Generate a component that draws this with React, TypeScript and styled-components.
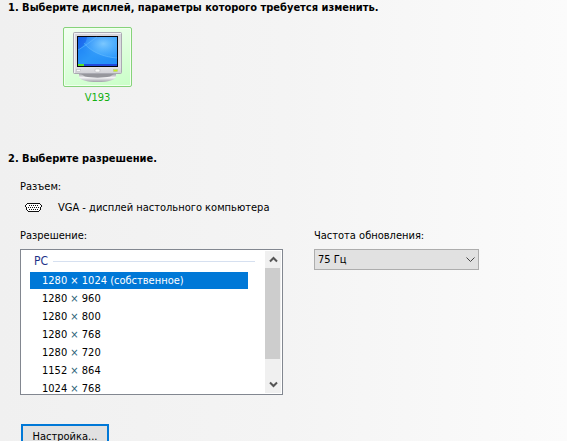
import React, { useState } from "react";
import styled, { createGlobalStyle } from "styled-components";

const GlobalStyle = createGlobalStyle`
  * { box-sizing: border-box; }
  html, body, #root { height: 100%; }
  body {
    margin: 0;
    overflow: hidden;
    background: linear-gradient(90deg, #f0f0f0 0%, #f4f4f4 50%, #fbfbfb 100%);
    color: #000;
    font: 11px/14px "DejaVu Sans Condensed", "Noto Sans", sans-serif;
  }
  button, select { font: inherit; color: inherit; border-radius: 0; }
`;

const Page = styled.main`
  padding: 1px 0 0 8px;
`;

const Section = styled.section<{ $space?: number }>`
  margin-top: ${(p) => p.$space ?? 0}px;
`;

const Heading = styled.h2`
  margin: 0;
  font-size: 11px;
  line-height: 14px;
  font-weight: 700;
  white-space: nowrap;
`;

const DisplayButton = styled.button`
  display: flex;
  flex-direction: column;
  align-items: center;
  gap: 4px;
  margin: 12px 0 0 55px;
  padding: 0;
  border: 0;
  background: none;
  color: #12b012;
  line-height: 14px;
`;

const DisplayTile = styled.span`
  display: flex;
  justify-content: center;
  padding: 4px 9px;
  border: 1px solid #86d37a;
  border-radius: 2px;
  box-shadow: inset 0 0 0 1px #f2fff0;
  background: linear-gradient(160deg, #f2fff1, #c9ffc7);
`;

const Fields = styled.div`
  padding: 14px 0 0 12px;
`;

const Label = styled.label`
  display: block;
  line-height: 14px;
`;

const Connector = styled.div`
  display: flex;
  align-items: center;
  gap: 16px;
  padding: 7px 0 0 5px;
  line-height: 14px;
`;

const Columns = styled.div`
  display: grid;
  grid-template-columns: minmax(0, 263fr) minmax(0, 165fr);
  column-gap: 31px;
  align-items: start;
  max-width: 459px;
  margin-top: 14px;
`;

const Field = styled.div`
  display: grid;
  gap: 6px;
`;

const ListBox = styled.div`
  display: flex;
  height: 146px;
  padding: 1px;
  border: 1px solid #828790;
  background: #fff;
`;

const ListBody = styled.div`
  flex: 1;
  min-width: 0;
  overflow: hidden;
  padding: 2px 17px 0 8px;
`;

const GroupTitle = styled.div`
  display: flex;
  align-items: center;
  gap: 5px;
  padding-left: 4px;
  margin-right: -7px;
  font-size: 12px;
  line-height: 16px;
  color: #1e3287;

  &::after {
    content: "";
    flex: 1;
    border-top: 1px solid #d6e0f0;
  }
`;

const Options = styled.div`
  display: grid;
  gap: 1px;
  padding-top: 3px;
`;

const Option = styled.button<{ $selected: boolean }>`
  width: 100%;
  height: 17px;
  padding: 1px 0 0 12px;
  border: 0;
  background: ${(p) => (p.$selected ? "#0078d7" : "transparent")};
  color: ${(p) => (p.$selected ? "#fff" : "#000")};
  line-height: 16px;
  text-align: left;
  white-space: nowrap;
`;

const Times = styled.span<{ $selected: boolean }>`
  color: ${(p) => (p.$selected ? "#fff" : "#2a5f78")};
`;

const ScrollBar = styled.div`
  display: flex;
  flex-direction: column;
  width: 16px;
  background: #f0f0f0;
`;

const ScrollButton = styled.button`
  display: flex;
  align-items: center;
  justify-content: center;
  height: 17px;
  padding: 0;
  border: 0;
  background: none;
`;

const ScrollTrack = styled.div`
  flex: 1;
`;

const ScrollThumb = styled.div`
  height: 84%;
  margin-right: 1px;
  background: #cdcdcd;
`;

const SelectWrap = styled.div`
  display: grid;
  align-items: center;
  & > * { grid-area: 1 / 1; }
  & > svg { justify-self: end; margin-right: 4px; pointer-events: none; }
`;

const Select = styled.select`
  appearance: none;
  width: 100%;
  height: 21px;
  padding: 1px 20px 0 3px;
  border: 1px solid #adadad;
  background: #e1e1e1;
  outline: none;
`;

const SetupButton = styled.button`
  display: block;
  height: 24px;
  min-width: 88px;
  margin: 29px 0 0 13px;
  padding: 1px 8px 0;
  border: 2px solid #0078d7;
  background: #e1e1e1;
  line-height: 19px;
`;

const MonitorIcon = () => (
  <svg width="49" height="50" viewBox="0 0 49 50" aria-hidden="true">
    <defs>
      <linearGradient id="case" x1="0" y1="0" x2="0" y2="1">
        <stop offset="0" stopColor="#d6d6dc" />
        <stop offset="0.85" stopColor="#e2e2e6" />
        <stop offset="1" stopColor="#d0d0d5" />
      </linearGradient>
      <linearGradient id="screen" x1="0" y1="0" x2="1" y2="1">
        <stop offset="0" stopColor="#1a74f4" />
        <stop offset="0.5" stopColor="#3aa4fc" />
        <stop offset="1" stopColor="#2b94fa" />
      </linearGradient>
      <linearGradient id="foot" x1="0" y1="0" x2="0" y2="1">
        <stop offset="0" stopColor="#a4a4aa" />
        <stop offset="0.45" stopColor="#f4f4f6" />
        <stop offset="1" stopColor="#a2a2aa" />
      </linearGradient>
      <radialGradient id="glow" cx="0.65" cy="0.25" r="0.6">
        <stop offset="0" stopColor="#7cc8ff" />
        <stop offset="1" stopColor="#4dacfd" stopOpacity="0" />
      </radialGradient>
    </defs>
    <path d="M6 42h37v2c0 4-8 6-18.500 6S6 48 6 44z" fill="url(#foot)" />
    <path d="M8 42h33l-4 2.500c-7 1.500-18 1.500-25 0z" fill="#96969c" />
    <rect x="0.5" y="0.5" width="48" height="41" rx="1" fill="url(#case)" stroke="#aaaab2" />
    <path d="M1.500 41V1.500H48" fill="none" stroke="#f1f1f5" />
    <rect x="4" y="4" width="41" height="31" fill="#05050d" />
    <rect x="5" y="5" width="39" height="29" fill="url(#screen)" />
    <rect x="5" y="5" width="39" height="27" fill="url(#glow)" />
    <path d="M5 18V5h9c-1 6-4 10-9 13z" fill="#1256e6" opacity="0.5" />
    <path d="M11 11c6 8 18 14 33 15v6H5V18c3-2 5-4 6-7z" fill="#1785f6" opacity="0.4" />
    <path d="M11 11c6 8 18 14 33 15M5 18c7-4 12-8 19-13" fill="none" stroke="#6cc0ff" strokeWidth="0.5" />
    <rect x="5" y="32" width="39" height="2" fill="#2149dc" />
    <rect x="5" y="32" width="6" height="2" fill="#5be026" />
    <rect x="3.5" y="37.5" width="4" height="2" fill="#f6f6f8" stroke="#bebec4" strokeWidth="0.6" />
    <rect x="22" y="37" width="5" height="3" rx="1" fill="#f8f8fa" stroke="#b8b8be" strokeWidth="0.6" />
    <rect x="40.5" y="37.5" width="4" height="2" fill="#c6ee20" stroke="#b6c07a" strokeWidth="0.4" />
  </svg>
);

const VgaIcon = () => (
  <svg width="17" height="10" viewBox="0 0 17 10" shapeRendering="crispEdges" aria-hidden="true">
    <path
      d="M2 0h13v1H2zM1 1h1v1H1zM15 1h1v1h-1zM0 2h1v2H0zM16 2h1v2h-1zM1 4h1v3H1zM15 4h1v3h-1zM2 7h1v1H2zM14 7h1v1h-1zM3 8h11v1H3z"
      fill="#111"
    />
    <path d="M2 1h13v1h1v2h-1v3h-1v1H3V7H2V4H1V2h1z" fill="#fff" />
    <path
      d="M4 2h1v1H4zM6 2h1v1H6zM8 2h1v1H8zM10 2h1v1h-1zM12 2h1v1h-1zM3 4h1v1H3zM5 4h1v1H5zM7 4h1v1H7zM9 4h1v1H9zM11 4h1v1h-1zM13 4h1v1h-1zM4 6h1v1H4zM6 6h1v1H6zM8 6h1v1H8zM10 6h1v1h-1zM12 6h1v1h-1z"
      fill="#111"
    />
  </svg>
);

const ScrollArrow = ({ down = false }: { down?: boolean }) => (
  <svg width="9" height="7" viewBox="0 0 9 7" aria-hidden="true">
    <path d={down ? "M1 1.500l3.500 3.500L8 1.500" : "M1 5.500L4.500 2L8 5.500"} fill="none" stroke="#555" strokeWidth="2" />
  </svg>
);

const SelectArrow = () => (
  <svg width="9" height="6" viewBox="0 0 9 6" aria-hidden="true">
    <path d="M0.500 0.500l4 4l4-4" fill="none" stroke="#444" strokeWidth="1" />
  </svg>
);

const resolutions = [
  { width: 1280, height: 1024, native: true },
  { width: 1280, height: 960 },
  { width: 1280, height: 800 },
  { width: 1280, height: 768 },
  { width: 1280, height: 720 },
  { width: 1152, height: 864 },
  { width: 1024, height: 768 },
];

export default function App() {
  const [selected, setSelected] = useState(0);

  return (
    <>
      <GlobalStyle />
      <Page>
        <Section>
          <Heading>1. Выберите дисплей, параметры которого требуется изменить.</Heading>
          <DisplayButton type="button" aria-pressed="true">
            <DisplayTile>
              <MonitorIcon />
            </DisplayTile>
            V193
          </DisplayButton>
        </Section>

        <Section $space={47}>
          <Heading>2. Выберите разрешение.</Heading>
          <Fields>
            <div>Разъем:</div>
            <Connector>
              <VgaIcon />
              <span>VGA - дисплей настольного компьютера</span>
            </Connector>
            <Columns>
              <Field>
                <Label as="div" id="resolution-label">Разрешение:</Label>
                <ListBox>
                  <ListBody role="listbox" aria-labelledby="resolution-label">
                    <GroupTitle>PC</GroupTitle>
                    <Options>
                      {resolutions.map((r, i) => (
                        <Option
                          key={`${r.width}x${r.height}`}
                          type="button"
                          role="option"
                          aria-selected={i === selected}
                          $selected={i === selected}
                          onClick={() => setSelected(i)}
                        >
                          {r.width} <Times $selected={i === selected}>×</Times> {r.height}
                          {r.native && " (собственное)"}
                        </Option>
                      ))}
                    </Options>
                  </ListBody>
                  <ScrollBar>
                    <ScrollButton type="button" aria-label="Вверх">
                      <ScrollArrow />
                    </ScrollButton>
                    <ScrollTrack>
                      <ScrollThumb />
                    </ScrollTrack>
                    <ScrollButton type="button" aria-label="Вниз">
                      <ScrollArrow down />
                    </ScrollButton>
                  </ScrollBar>
                </ListBox>
              </Field>
              <Field>
                <Label htmlFor="refresh-rate">Частота обновления:</Label>
                <SelectWrap>
                  <Select id="refresh-rate" defaultValue="75">
                    <option value="60">60 Гц</option>
                    <option value="75">75 Гц</option>
                  </Select>
                  <SelectArrow />
                </SelectWrap>
              </Field>
            </Columns>
          </Fields>
          <SetupButton type="button">Настройка...</SetupButton>
        </Section>
      </Page>
    </>
  );
}
